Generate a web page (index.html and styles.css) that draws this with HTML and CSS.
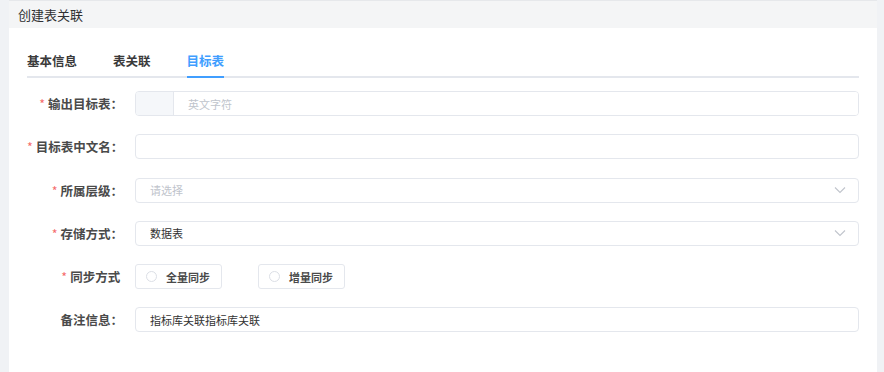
FILE: index.html
```html
<!DOCTYPE html>
<html lang="zh-CN">

<head>
    <meta charset="UTF-8">
    <meta name="viewport" content="width=device-width, initial-scale=1.0">
    <title>创建表关联</title>
    <link rel="stylesheet" href="styles.css">
</head>

<body>
    <div class="panel">
        <div class="panel-header">创建表关联</div>
        <div class="panel-body">
            <div class="tabs">
                <div class="tab">基本信息</div>
                <div class="tab">表关联</div>
                <div class="tab active">目标表</div>
            </div>
            <form class="form" action="#">
                <div class="form-item">
                    <label class="form-label required">输出目标表：</label>
                    <div class="input-group">
                        <span class="input-prepend"></span>
                        <input class="input" type="text" placeholder="英文字符">
                    </div>
                </div>
                <div class="form-item">
                    <label class="form-label required">目标表中文名：</label>
                    <input class="input" type="text">
                </div>
                <div class="form-item">
                    <label class="form-label required">所属层级：</label>
                    <div class="select">
                        <span class="placeholder">请选择</span>
                        <svg class="arrow" width="12" height="8" viewBox="0 0 12 8"><path d="M1 1.5l5 5 5-5" fill="none" stroke="#c0c4cc" stroke-width="1.1"/></svg>
                    </div>
                </div>
                <div class="form-item">
                    <label class="form-label required">存储方式：</label>
                    <div class="select">
                        <span>数据表</span>
                        <svg class="arrow" width="12" height="8" viewBox="0 0 12 8"><path d="M1 1.5l5 5 5-5" fill="none" stroke="#c0c4cc" stroke-width="1.1"/></svg>
                    </div>
                </div>
                <div class="form-item">
                    <label class="form-label required">同步方式&nbsp;</label>
                    <div class="radio-group">
                        <label class="radio"><span class="radio-dot"></span>全量同步</label>
                        <label class="radio"><span class="radio-dot"></span>增量同步</label>
                    </div>
                </div>
                <div class="form-item">
                    <label class="form-label">备注信息：</label>
                    <input class="input" type="text" value="指标库关联指标库关联">
                </div>
            </form>
        </div>
    </div>
</body>

</html>
```

FILE: styles.css
```css
body {
    margin: 0;
    background-color: #f0f2f5;
    font-family: "Noto Sans CJK SC", "Noto Sans", sans-serif;
    color: #333;
}

.panel {
    margin-left: 9px;
    width: 868px;
    height: 372px;
    background-color: #fff;
}

.panel-header {
    height: 27px;
    line-height: 27px;
    padding-left: 9px;
    background-color: #f4f5f6;
    border-top: 1px solid #e6e8eb;
    font-size: 13px;
    color: #303133;
}

.panel-body {
    padding: 0 18px;
}

.tabs {
    display: flex;
    gap: 36px;
    margin-top: 20px;
    border-bottom: 2px solid #e4e7ed;
}

.tab {
    font-size: 12.5px;
    font-weight: bold;
    line-height: 25px;
    padding-bottom: 3px;
    margin-bottom: -2px;
    border-bottom: 2px solid transparent;
    color: #3a3a3a;
}

.tab.active {
    color: #409eff;
    border-bottom-color: #409eff;
}

.form {
    margin-top: 13px;
}

.form-item {
    display: flex;
    align-items: center;
    height: 25px;
    margin-bottom: 18.25px;
}

.form-label {
    width: 96px;
    flex-shrink: 0;
    margin-right: 12px;
    text-align: right;
    font-size: 12.5px;
    font-weight: bold;
    color: #4a4a4a;
    white-space: nowrap;
}

.form-label.required::before {
    content: "*";
    color: #f56c6c;
    margin-right: 3px;
    font-weight: normal;
}

.input,
.select,
.input-group {
    flex: 1;
    box-sizing: border-box;
    height: 25px;
    border: 1px solid #e4e7ed;
    border-radius: 4px;
    font-family: inherit;
    font-size: 11px;
    color: #333;
}

.input {
    padding: 0 14px;
    outline: none;
}

.input::placeholder {
    color: #c0c4cc;
}

.input-group {
    display: flex;
    overflow: hidden;
}

.input-group .input {
    border: none;
    border-radius: 0;
    height: 23px;
}

.input-prepend {
    width: 37px;
    background-color: #f5f7fa;
    border-right: 1px solid #e4e7ed;
}

.select {
    display: flex;
    align-items: center;
    justify-content: space-between;
    padding: 0 12px 0 14px;
}

.placeholder {
    color: #c0c4cc;
}

.radio-group {
    display: flex;
    gap: 36px;
}

.radio {
    display: flex;
    align-items: center;
    box-sizing: border-box;
    width: 87px;
    height: 25px;
    padding: 0 0 0 10px;
    border: 1px solid #e4e7ed;
    border-radius: 3px;
    font-size: 11px;
    font-weight: bold;
    color: #4a4a4a;
}

.radio-dot {
    width: 9px;
    height: 9px;
    border: 1px solid #dcdfe6;
    border-radius: 50%;
    margin-right: 9px;
}
```
